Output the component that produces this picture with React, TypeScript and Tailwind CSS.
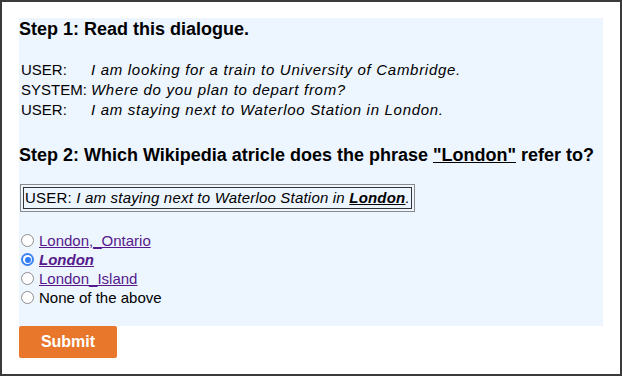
import { useState } from "react"

const lines = [
  { who: "USER:", text: "I am looking for a train to University of Cambridge." },
  { who: "SYSTEM:", text: "Where do you plan to depart from?" },
  { who: "USER:", text: "I am staying next to Waterloo Station in London." },
]

const options = [
  { id: "ontario", label: "London,_Ontario", link: true },
  { id: "london", label: "London", link: true },
  { id: "island", label: "London_Island", link: true },
  { id: "none", label: "None of the above", link: false },
]

// Radio dot drawn by hand so it looks like the screenshot
function Radio({ checked }: { checked: boolean }) {
  if (checked) {
    return (
      <span className="w-[13px] h-[13px] rounded-full bg-[#3b82f6] flex items-center justify-center shrink-0">
        <span className="w-[9px] h-[9px] rounded-full bg-white flex items-center justify-center">
          <span className="w-[6px] h-[6px] rounded-full bg-[#2f7cf6]"></span>
        </span>
      </span>
    )
  }
  return <span className="w-[13px] h-[13px] rounded-full border border-[#8e8e8e] bg-white shrink-0"></span>
}

export default function App() {
  const [choice, setChoice] = useState("london")

  return (
    <div
      className="w-[622px] h-[376px] bg-white border-2 border-[#3a3a3a] pl-[17px] pt-[16px] text-black"
      style={{ fontFamily: '"Liberation Sans", Arial, sans-serif' }}
    >
      <div className="w-[584px] h-[308px] bg-[#edf5ff] pt-[1px]">
        <h2 className="text-[18px] leading-[20px] font-bold">Step 1: Read this dialogue.</h2>

        {/* Dialogue */}
        <div className="mt-[21px] pl-[2px] grid grid-cols-[70px_1fr] text-[15px] leading-[20px]">
          {lines.map((l, i) => (
            <div key={i} className="contents">
              <span>{l.who}</span>
              <span className="italic tracking-[0.7px]">{l.text}</span>
            </div>
          ))}
        </div>

        <h2 className="mt-[24px] text-[18px] leading-[22px] font-bold">
          Step 2: Which Wikipedia atricle does the phrase <span className="underline">"London"</span> refer to?
        </h2>

        {/* Quoted utterance */}
        <div className="mt-[18px] ml-[1px] inline-block border border-[#8a8a8a] p-[2px]">
          <div className="border border-[#333] px-[1px] text-[15px] leading-[20px] tracking-[0.2px]">
            USER: <span className="italic">I am staying next to Waterloo Station in <span className="font-bold underline">London</span>.</span>
          </div>
        </div>

        {/* Choices */}
        <div className="mt-[19px] flex flex-col text-[15px] leading-[19px]">
          {options.map((o) => (
            <label key={o.id} className="flex items-center gap-[5px] pl-[2px] cursor-pointer" onClick={() => setChoice(o.id)}>
              <Radio checked={choice === o.id} />
              {o.link ? (
                <a
                  href="#"
                  onClick={(e) => e.preventDefault()}
                  className={`text-[#551a8b] underline ${choice === o.id ? "font-bold italic" : ""}`}
                >
                  {o.label}
                </a>
              ) : (
                <span className={choice === o.id ? "font-bold italic" : ""}>{o.label}</span>
              )}
            </label>
          ))}
        </div>
      </div>

      <button className="w-[98px] h-[32px] bg-[#e8772b] text-white font-bold text-[16px] rounded-[2px]">Submit</button>
    </div>
  )
}
